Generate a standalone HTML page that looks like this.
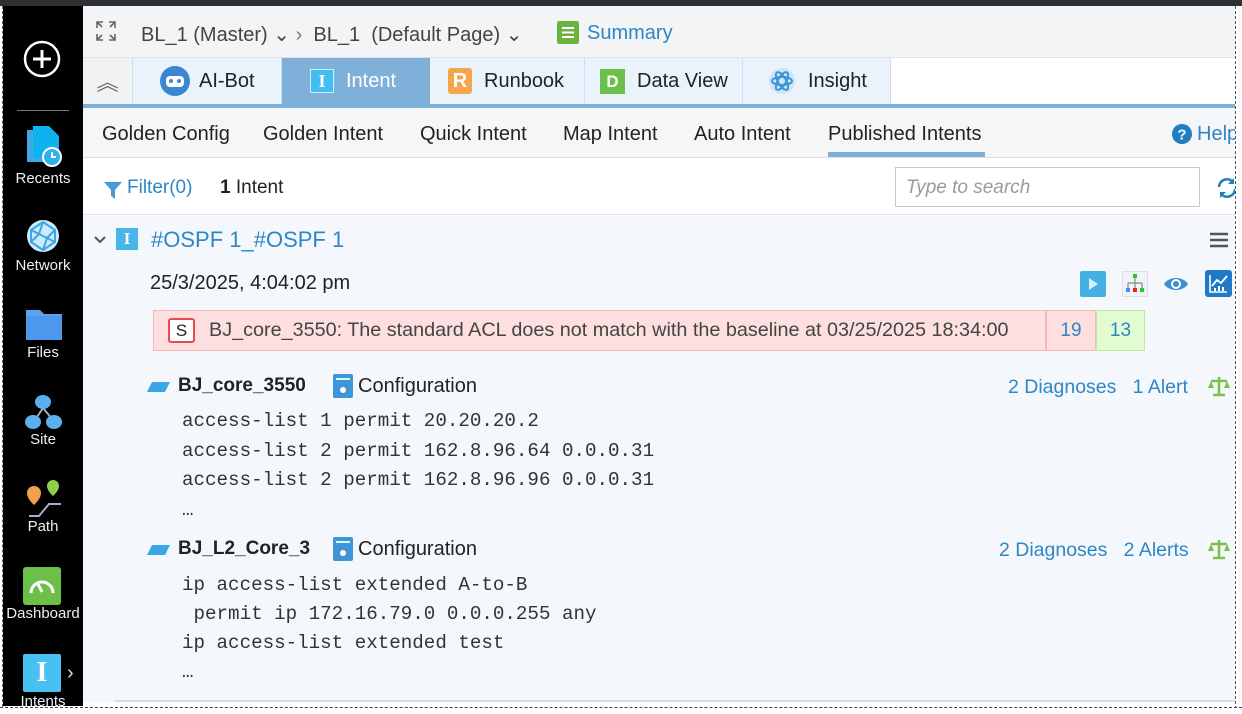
<!DOCTYPE html>
<html><head><meta charset="utf-8"><style>
*{margin:0;padding:0;box-sizing:border-box}
body{width:1242px;height:714px;overflow:hidden;background:#fff;font-family:"Liberation Sans",sans-serif;position:relative;color:#222}
.a{position:absolute;white-space:nowrap}
.t{font-size:20px}
.mono{font-family:"Liberation Mono",monospace;font-size:19.2px;color:#333;white-space:pre}
.blue{color:#2f86c4}
.side{position:absolute;left:3px;top:6px;width:80px;height:700px;background:#000}
.sl{position:absolute;width:80px;text-align:center;color:#eee;font-size:15px}
.tab{position:absolute;top:58px;height:46px;background:#eaf3fc;border-right:1px solid #cfdeee;font-size:20px;color:#222;display:flex;align-items:center}
</style></head><body>
<div class="a" style="left:0;top:0;width:1242px;height:6px;background:#2e3134"></div>
<div class="side">
 <svg class="a" style="left:19px;top:33px" width="40" height="40"><circle cx="20" cy="20" r="17" fill="none" stroke="#fff" stroke-width="2.5"/><path d="M20 11v18M11 20h18" stroke="#fff" stroke-width="3"/></svg>
 <div class="a" style="left:14px;top:104px;width:52px;height:1px;background:#777"></div>
 <svg class="a" style="left:22px;top:118px" width="38" height="46"><path d="M2 6h20l10 10v22H2z" fill="#3fa9e6"/><path d="M8 2h16l10 10v22H8z" fill="#0fb1ee"/><circle cx="27" cy="33" r="9" fill="#2db2ee" stroke="#fff" stroke-width="2"/><path d="M27 28v5h4" stroke="#fff" stroke-width="2" fill="none"/></svg>
 <div class="sl" style="left:0;top:164px">Recents</div>
 <svg class="a" style="left:22px;top:212px" width="36" height="36"><circle cx="18" cy="18" r="16" fill="#cfeafc"/><path d="M6 12L18 4 30 12 30 24 18 32 6 24Z M18 4L14 16 6 12 M14 16L22 20 30 12 M22 20L18 32 M14 16L6 24 M22 20L30 24" stroke="#3aa7e6" stroke-width="2" fill="none"/></svg>
 <div class="sl" style="left:0;top:251px">Network</div>
 <svg class="a" style="left:21px;top:298px" width="40" height="40"><path d="M2 6h14l4 4h18v26H2z" fill="#5aa3ee"/><path d="M2 12h36v24H2z" fill="#4d97ec"/></svg>
 <div class="sl" style="left:0;top:338px">Files</div>
 <svg class="a" style="left:20px;top:386px" width="42" height="40"><path d="M20 16L12 28M20 16L30 28" stroke="#aaa" stroke-width="2"/><ellipse cx="20" cy="10" rx="8" ry="7" fill="#5ab0ee"/><ellipse cx="10" cy="30" rx="8" ry="7" fill="#5ab0ee"/><ellipse cx="31" cy="30" rx="8" ry="7" fill="#5ab0ee"/></svg>
 <div class="sl" style="left:0;top:425px">Site</div>
 <svg class="a" style="left:20px;top:474px" width="42" height="40"><path d="M6 36h10l10-12h12" stroke="#aac" stroke-width="2" fill="none"/><path d="M11 6a7 7 0 0 1 7 7c0 6-7 12-7 12s-7-6-7-12a7 7 0 0 1 7-7z" fill="#f0a050"/><path d="M30 0a6 6 0 0 1 6 6c0 5-6 10-6 10s-6-5-6-10a6 6 0 0 1 6-6z" fill="#8fd04a"/></svg>
 <div class="sl" style="left:0;top:512px">Path</div>
 <div class="a" style="left:20px;top:561px;width:38px;height:38px;background:#6cc04a;border-radius:3px"><svg width="38" height="38"><path d="M8 26a11 11 0 0 1 22 0" stroke="#fff" stroke-width="3" fill="none"/><path d="M19 25l-4-8" stroke="#fff" stroke-width="3"/></svg></div>
 <div class="sl" style="left:-2px;top:599px;width:84px">Dashboard</div>
 <div class="a" style="left:20px;top:648px;width:38px;height:38px;background:#47c0f2;border-radius:2px;color:#fff;font:bold 28px 'Liberation Serif',serif;text-align:center;line-height:38px">I</div>
 <div class="a" style="left:64px;top:656px;color:#ddd;font-size:20px">›</div>
 <div class="sl" style="left:0;top:687px">Intents</div>
</div>
<!-- breadcrumb -->
<div class="a" style="left:83px;top:6px;width:1152px;height:52px;background:#f3f4f6"></div>
<svg class="a" style="left:95px;top:20px" width="22" height="22"><path d="M2 8V2h6M2 2l5 5M20 8V2h-6M20 2l-5 5M2 14v6h6M2 20l5-5M20 14v6h-6M20 20l-5-5" stroke="#666" stroke-width="1.6" fill="none"/></svg>
<div class="a t" style="left:141px;top:22px;color:#444">BL_1 (Master) ⌄ <span style="color:#777">›</span>&nbsp; BL_1&nbsp; (Default Page) ⌄</div>
<div class="a" style="left:557px;top:21px;width:22px;height:23px;background:#6db33f;border-radius:2px"><svg width="22" height="23"><path d="M5 7h12M5 11.5h12M5 16h12" stroke="#fff" stroke-width="2"/></svg></div>
<div class="a t blue" style="left:587px;top:22px">Summary</div>
<!-- tabs -->
<div class="a" style="left:83px;top:57px;width:1152px;height:51px;background:#fff;border-top:1px solid #e0e4e8"></div>
<div class="a" style="left:83px;top:104px;width:1152px;height:4px;background:#7fb0d8"></div>
<div class="tab" style="left:83px;width:50px;background:#f1f2f4;justify-content:center;color:#666;font-size:22px">︽</div>
<div class="tab" style="left:133px;width:149px;padding-left:26px"><svg width="32" height="32"><circle cx="16" cy="16" r="15" fill="#3b86d2"/><rect x="7" y="11" width="18" height="11" rx="4" fill="#fff"/><circle cx="12" cy="16" r="2" fill="#3b86d2"/><circle cx="20" cy="16" r="2" fill="#3b86d2"/></svg><span style="margin-left:8px">AI-Bot</span></div>
<div class="tab" style="left:282px;width:148px;background:#7eb0d9;color:#fff;padding-left:28px;border:none"><span style="display:inline-block;width:24px;height:24px;background:#41bff0;border:1px solid #cdeefc;text-align:center;font:bold 18px 'Liberation Serif',serif;line-height:22px">I</span><span style="margin-left:12px">Intent</span></div>
<div class="tab" style="left:430px;width:155px;padding-left:18px"><span style="display:inline-block;width:24px;height:26px;background:#f5a54a;border-radius:3px;color:#fff;text-align:center;font-weight:bold;line-height:26px">R</span><span style="margin-left:12px">Runbook</span></div>
<div class="tab" style="left:585px;width:158px;padding-left:15px"><span style="display:inline-block;width:25px;height:25px;background:#6cc04a;color:#fff;text-align:center;font-weight:bold;line-height:25px;font-size:17px">D</span><span style="margin-left:12px">Data View</span></div>
<div class="tab" style="left:743px;width:148px;padding-left:25px"><svg width="28" height="28"><circle cx="14" cy="14" r="13" fill="#cde5f7"/><ellipse cx="14" cy="14" rx="10" ry="4" fill="none" stroke="#3a96d6" stroke-width="2"/><ellipse cx="14" cy="14" rx="10" ry="4" fill="none" stroke="#3a96d6" stroke-width="2" transform="rotate(60 14 14)"/><ellipse cx="14" cy="14" rx="10" ry="4" fill="none" stroke="#3a96d6" stroke-width="2" transform="rotate(-60 14 14)"/></svg><span style="margin-left:12px">Insight</span></div>
<!-- subtabs -->
<div class="a" style="left:83px;top:108px;width:1152px;height:50px;background:#f5f6f7;border-bottom:1px solid #dcdfe3"></div>
<div class="a t" style="left:102px;top:123px">Golden Config</div>
<div class="a t" style="left:263px;top:123px">Golden Intent</div>
<div class="a t" style="left:420px;top:123px">Quick Intent</div>
<div class="a t" style="left:563px;top:123px">Map Intent</div>
<div class="a t" style="left:694px;top:123px">Auto Intent</div>
<div class="a t" style="left:828px;top:123px">Published Intents</div>
<div class="a" style="left:828px;top:152px;width:157px;height:5px;background:#7fb0d8"></div>
<svg class="a" style="left:1172px;top:124px" width="20" height="20"><circle cx="10" cy="10" r="10" fill="#1f7fc1"/><text x="10" y="15.5" text-anchor="middle" fill="#fff" font-size="15" font-weight="bold" font-family="Liberation Sans">?</text></svg>
<div class="a t blue" style="left:1197px;top:123px">Help</div>
<!-- filter -->
<div class="a" style="left:83px;top:159px;width:1152px;height:56px;background:#fff;border-bottom:1px solid #dde2e8"></div>
<svg class="a" style="left:103px;top:180px" width="20" height="20"><path d="M1 2h18l-7 8v9l-4-3v-6z" fill="#4a9ad6"/></svg>
<div class="a" style="left:127px;top:177px;font-size:19px;color:#2f86c4">Filter(0)</div>
<div class="a" style="left:220px;top:177px;font-size:19px"><b>1</b> Intent</div>
<div class="a" style="left:895px;top:167px;width:305px;height:40px;border:1px solid #c8c8c8;background:#fff"></div>
<div class="a" style="left:906px;top:177px;font-size:19px;font-style:italic;color:#9a9a9a">Type to search</div>
<svg class="a" style="left:1216px;top:177px" width="22" height="22"><path d="M3 10a8 8 0 0 1 14-5M19 12a8 8 0 0 1-14 5" stroke="#1f7fc1" stroke-width="2.6" fill="none"/><path d="M18 1v6h-6z M4 21v-6h6z" fill="#1f7fc1"/></svg>
<!-- content -->
<div class="a" style="left:83px;top:216px;width:1152px;height:486px;background:#f4f8fd"></div>
<div class="a" style="left:115px;top:700px;width:1120px;height:2px;background:#ddd"></div>
<svg class="a" style="left:93px;top:235px" width="14" height="10"><path d="M2 2l5 5 5-5" stroke="#555" stroke-width="2" fill="none"/></svg>
<div class="a" style="left:116px;top:228px;width:22px;height:22px;background:#46b6e8;color:#fff;text-align:center;font:bold 17px 'Liberation Serif',serif;line-height:22px">I</div>
<div class="a" style="left:151px;top:227px;font-size:22px;color:#2f86c4">#OSPF 1_#OSPF 1</div>
<svg class="a" style="left:1210px;top:232px" width="18" height="16"><path d="M0 2h18M0 8h18M0 14h18" stroke="#555" stroke-width="2.6"/></svg>
<div class="a" style="left:150px;top:272px;font-size:20px">25/3/2025, 4:04:02 pm</div>
<div class="a" style="left:1080px;top:271px;width:26px;height:26px;background:#45b0e4;border-radius:2px"><svg width="26" height="26"><path d="M9 7l9 6-9 6z" fill="#d9f0fb"/></svg></div>
<svg class="a" style="left:1122px;top:271px" width="26" height="26"><rect x=".5" y=".5" width="25" height="25" fill="#f0f3f7" stroke="#dde"/><rect x="11" y="3" width="4" height="4" fill="#2c2"/><path d="M13 7v5M6 12h14M6 12v5M13 12v5M20 12v5" stroke="#888" stroke-width="1.2" fill="none"/><rect x="4" y="17" width="4" height="4" fill="#48f"/><rect x="11" y="17" width="4" height="4" fill="#e22"/><rect x="18" y="17" width="4" height="4" fill="#2c2"/></svg>
<svg class="a" style="left:1163px;top:274px" width="26" height="20"><path d="M1 10C6 2 20 2 25 10C20 18 6 18 1 10z" fill="#3f8dd4"/><circle cx="13" cy="10" r="5" fill="#fff"/><circle cx="13" cy="10" r="3" fill="#3f8dd4"/></svg>
<div class="a" style="left:1205px;top:270px;width:27px;height:27px;background:#1f78c8;border-radius:3px"><svg width="27" height="27"><path d="M5 5v17h17" stroke="#fff" stroke-width="1.6" fill="none"/><path d="M7 16l5-6 4 3 6-7" stroke="#fff" stroke-width="1.8" fill="none"/><path d="M10 21v-3M14 21v-5M18 21v-4" stroke="#fff" stroke-width="2"/></svg></div>
<div class="a" style="left:153px;top:310px;width:893px;height:41px;background:#fddfdf;border:1px solid #f7b7b7"></div>
<div class="a" style="left:1046px;top:310px;width:50px;height:41px;background:#fddfdf;border:1px solid #f7b7b7;text-align:center;line-height:39px;font-size:19px;color:#2f86c4">19</div>
<div class="a" style="left:1096px;top:310px;width:49px;height:41px;background:#e2fbd0;border:1px solid #c0e8a0;text-align:center;line-height:39px;font-size:19px;color:#2f86c4">13</div>
<div class="a" style="left:168px;top:318px;width:27px;height:25px;border:2px solid #e84b4b;border-radius:3px;background:#fff;text-align:center;line-height:21px;font-size:17px">S</div>
<div class="a" style="left:209px;top:319px;font-size:19.8px;color:#444">BJ_core_3550: The standard ACL does not match with the baseline at 03/25/2025 18:34:00</div>
<svg class="a" style="left:147px;top:380px" width="24" height="14"><path d="M5 2h18l-5 10H0z" fill="#3aa6e6"/></svg>
<div class="a" style="left:178px;top:375px;font-size:19px;font-weight:bold;color:#222">BJ_core_3550</div>
<div class="a" style="left:333px;top:374px;width:20px;height:24px;background:#3f95d6;border-radius:2px"><svg width="20" height="24"><rect x="3" y="4" width="14" height="2" fill="#cfe"/><circle cx="10" cy="16" r="3" fill="#fff"/></svg></div>
<div class="a" style="left:358px;top:375px;font-size:20px">Configuration</div>
<div class="a" style="left:1008px;top:376px;font-size:19.5px;color:#2f86c4">2 Diagnoses&nbsp;&nbsp; 1 Alert</div>
<svg class="a" style="left:1207px;top:375px" width="24" height="24"><path d="M12 2v18M4 6h16M6 20h12" stroke="#7cc04a" stroke-width="2.5"/><path d="M1 13l3-7 3 7zM17 13l3-7 3 7z" fill="#7cc04a"/></svg>
<div class="a mono" style="left:182px;top:407px;line-height:29.5px">access-list 1 permit 20.20.20.2
access-list 2 permit 162.8.96.64 0.0.0.31
access-list 2 permit 162.8.96.96 0.0.0.31
…</div>
<svg class="a" style="left:147px;top:543px" width="24" height="14"><path d="M5 2h18l-5 10H0z" fill="#3aa6e6"/></svg>
<div class="a" style="left:178px;top:538px;font-size:19px;font-weight:bold;color:#222">BJ_L2_Core_3</div>
<div class="a" style="left:333px;top:537px;width:20px;height:24px;background:#3f95d6;border-radius:2px"><svg width="20" height="24"><rect x="3" y="4" width="14" height="2" fill="#cfe"/><circle cx="10" cy="16" r="3" fill="#fff"/></svg></div>
<div class="a" style="left:358px;top:538px;font-size:20px">Configuration</div>
<div class="a" style="left:999px;top:539px;font-size:19.5px;color:#2f86c4">2 Diagnoses&nbsp;&nbsp; 2 Alerts</div>
<svg class="a" style="left:1207px;top:538px" width="24" height="24"><path d="M12 2v18M4 6h16M6 20h12" stroke="#7cc04a" stroke-width="2.5"/><path d="M1 13l3-7 3 7zM17 13l3-7 3 7z" fill="#7cc04a"/></svg>
<div class="a mono" style="left:182px;top:571px;line-height:29px">ip access-list extended A-to-B
 permit ip 172.16.79.0 0.0.0.255 any
ip access-list extended test
…</div>
<!-- torn edges -->
<div class="a" style="left:1235px;top:6px;width:7px;height:708px;background:#fff;border-left:1px dashed #555"></div>
<div class="a" style="left:0;top:707px;width:1242px;height:7px;background:#fff;border-top:1px dashed #444"></div>
<div class="a" style="left:0;top:6px;width:3px;height:701px;background:#fff;border-right:1px dashed #666"></div>
</body></html>
